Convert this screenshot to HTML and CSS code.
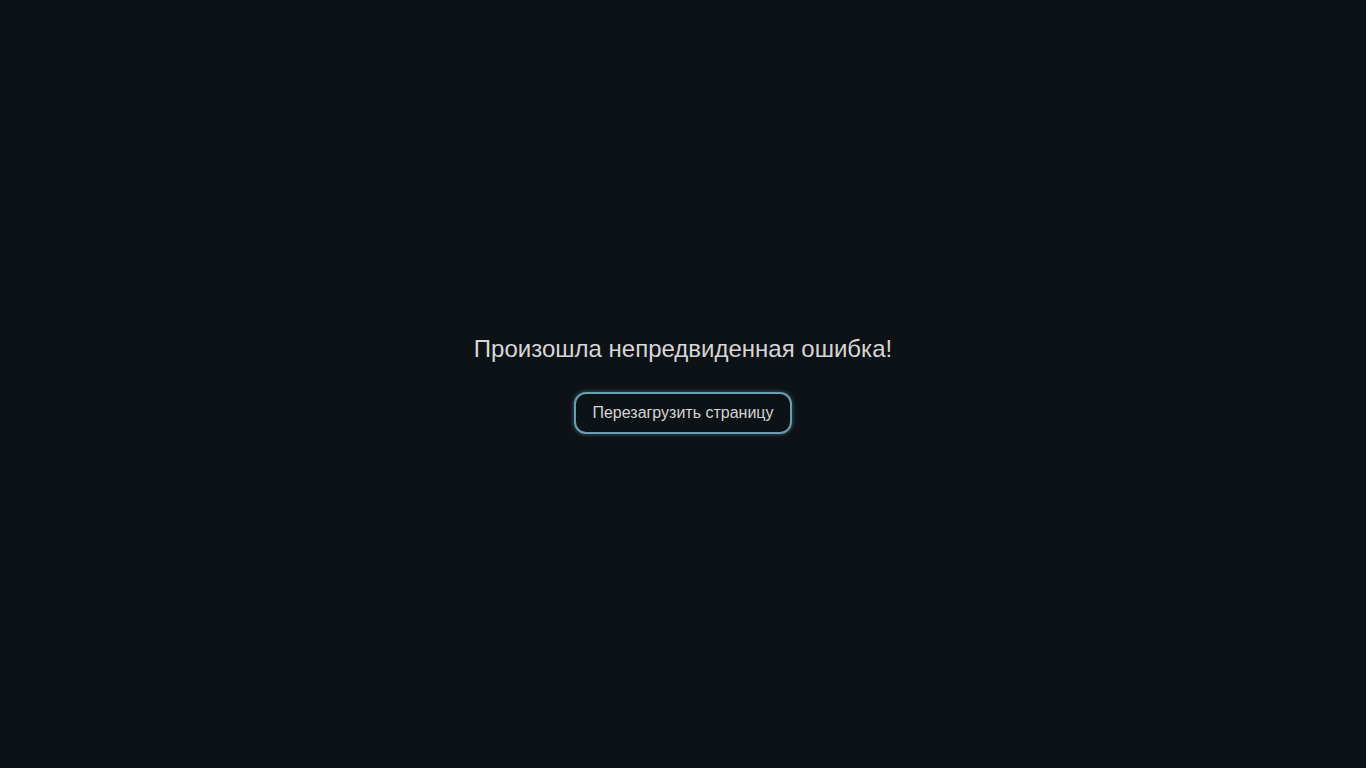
FILE: index.html
```html
<!DOCTYPE html>
<html lang="ru">
<head>
<meta charset="utf-8">
<title>Ошибка</title>
<link rel="stylesheet" href="styles.css">
</head>
<body>
<main class="error">
  <h1 class="error-title">Произошла непредвиденная ошибка!</h1>
  <button class="reload-btn" type="button">Перезагрузить страницу</button>
</main>
</body>
</html>
```
FILE: styles.css
```css
html, body {
  margin: 0;
  padding: 0;
  height: 100%;
  background: #0d1216;
}
body {
  font-family: "Liberation Sans", Arial, sans-serif;
  color: #d4d4d4;
}
.error {
  height: 100%;
  display: flex;
  flex-direction: column;
  align-items: center;
  justify-content: center;
  gap: 29px;
}
.error-title {
  margin: 0;
  font-size: 24px;
  line-height: 28px;
  font-weight: 400;
  color: #d6d6d6;
}
.reload-btn {
  font-family: "Liberation Sans", Arial, sans-serif;
  font-size: 16px;
  line-height: 18px;
  color: #d2d2d2;
  background: #0d1216;
  border: 2px solid #6a9db0;
  border-radius: 12px;
  padding: 10px 16px;
  box-shadow: 0 0 4px rgba(106, 157, 176, 0.6);
  cursor: pointer;
}
```
